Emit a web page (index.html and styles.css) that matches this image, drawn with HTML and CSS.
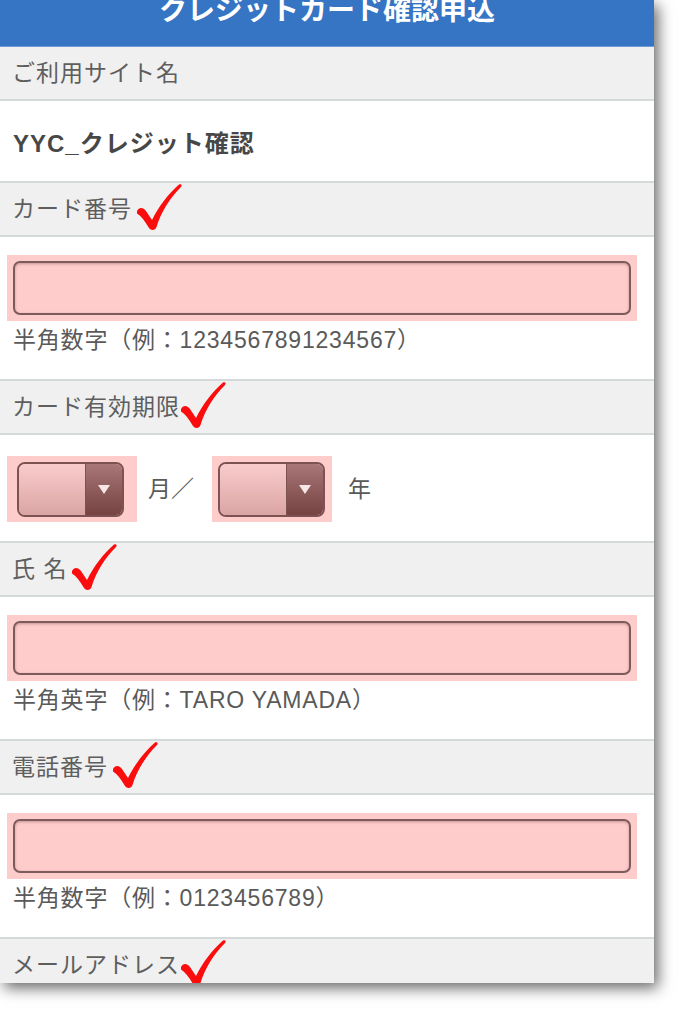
FILE: index.html
```html
<!DOCTYPE html>
<html lang="ja">
<head>
<meta charset="utf-8">
<title>クレジットカード確認申込</title>
<link rel="stylesheet" href="styles.css">
</head>
<body>
<svg class="defs" width="0" height="0" aria-hidden="true">
  <defs>
    <path id="chk" d="M0,27 C2,23 6,23 9,27 L15,36 C22,22 32,9 42,0.5 C44,-0.5 45.5,1 44,3 C33,14 24,28 19.5,43 C18.5,46.5 14,47 12,44 C8,37 4,32 0,29.5 Z"/>
  </defs>
</svg>
<div class="page">
<div class="panel">
  <header class="hdr"><h1 class="hdr-title">クレジットカード確認申込</h1></header>

  <div class="band band-first"><span class="lbl">ご利用サイト名</span></div>
  <div class="row-site">YYC_クレジット確認</div>

  <div class="band"><span class="lbl">カード番号</span><svg class="chk" viewBox="0 0 45 46"><use href="#chk"/></svg></div>
  <div class="field">
    <div class="hl"><div class="inp"></div></div>
    <div class="hint">半角数字（例：1234567891234567）</div>
  </div>

  <div class="band"><span class="lbl">カード有効期限</span><svg class="chk chk-tight" viewBox="0 0 45 46"><use href="#chk"/></svg></div>
  <div class="field-exp">
    <div class="hl hl-sel1"><div class="sel"><div class="sel-main"></div><div class="sel-btn"><span class="tri"></span></div></div></div>
    <span class="unit unit-m">月／</span>
    <div class="hl hl-sel2"><div class="sel"><div class="sel-main"></div><div class="sel-btn"><span class="tri"></span></div></div></div>
    <span class="unit unit-y">年</span>
  </div>

  <div class="band"><span class="lbl">氏 名</span><svg class="chk" viewBox="0 0 45 46"><use href="#chk"/></svg></div>
  <div class="field">
    <div class="hl"><div class="inp"></div></div>
    <div class="hint">半角英字（例：TARO YAMADA）</div>
  </div>

  <div class="band"><span class="lbl">電話番号</span><svg class="chk" viewBox="0 0 45 46"><use href="#chk"/></svg></div>
  <div class="field">
    <div class="hl"><div class="inp"></div></div>
    <div class="hint">半角数字（例：0123456789）</div>
  </div>

  <div class="band band-last"><span class="lbl">メールアドレス</span><svg class="chk chk-tight" viewBox="0 0 45 46"><use href="#chk"/></svg></div>
</div>
</div>
</body>
</html>
```
FILE: styles.css
```css
html, body {
  margin: 0;
  padding: 0;
  background: #ffffff;
}
body {
  font-family: "Liberation Sans", "Noto Sans CJK JP", sans-serif;
  color: #5a5a5a;
}
.defs {
  position: absolute;
  width: 0;
  height: 0;
}
.page {
  height: 1024px;
  overflow: hidden;
}
.panel {
  width: 654px;
  height: 983px;
  overflow: hidden;
  background: #ffffff;
  box-shadow: 4px 5px 14px rgba(0, 0, 0, 0.6);
}
.hdr {
  height: 46px;
  background: #3674c4;
  border-bottom: 1px solid #6f9bd6;
  overflow: hidden;
  display: flex;
  justify-content: center;
}
.hdr-title {
  margin: -12px 0 0 0;
  font-family: "Noto Sans CJK JP", sans-serif;
  font-size: 28px;
  line-height: 40px;
  font-weight: 700;
  color: #ffffff;
}
.band {
  height: 52px;
  background: #f0f0f0;
  border-top: 2px solid #d6d9d9;
  border-bottom: 2px solid #d6d9d9;
  display: flex;
  align-items: center;
  padding-left: 12px;
}
.band-first {
  border-top: none;
}
.band-last {
  border-bottom: none;
}
.lbl {
  font-size: 23px;
  letter-spacing: 1px;
  color: #5e5e5e;
  line-height: 30px;
}
.chk {
  width: 45px;
  height: 46px;
  align-self: flex-start;
  margin-top: 1px;
  margin-left: 5px;
  fill: #fb0d0d;
  overflow: visible;
}
.chk-tight {
  margin-left: 1px;
}
.row-site {
  height: 80px;
  display: flex;
  align-items: center;
  padding-left: 13px;
  font-size: 24px;
  letter-spacing: 1px;
  font-weight: 700;
  color: #474747;
}
.field {
  padding: 18px 0 26px 7px;
}
.hl {
  background: #ffcccc;
  padding: 6px;
  width: 618px;
}
.inp {
  height: 50px;
  border: 2px solid #7d5b5b;
  border-radius: 7px;
  background: #ffcccc;
  box-shadow: inset 0 1px 3px rgba(90, 40, 40, 0.35);
}
.hint {
  margin-top: 6px;
  padding-left: 6px;
  font-size: 23px;
  line-height: 26px;
  letter-spacing: 0.8px;
  color: #5a5a5a;
}
.field-exp {
  height: 105px;
  display: flex;
  align-items: center;
  padding-left: 7px;
  padding-top: 1px;
}
.hl-sel1 {
  width: auto;
  padding: 6px 13px 5px 10px;
}
.hl-sel2 {
  width: auto;
  padding: 6px 7px 5px 6px;
}
.sel {
  width: 103px;
  height: 51px;
  border: 2px solid #7d5252;
  border-radius: 8px;
  overflow: hidden;
  display: flex;
}
.sel-main {
  flex: 1;
  background: linear-gradient(#f9cccc, #dba4a4);
  border-right: 1px solid #7d5252;
}
.sel-btn {
  width: 36px;
  background: linear-gradient(#a87777, #764242);
  display: flex;
  align-items: center;
  justify-content: center;
}
.tri {
  width: 0;
  height: 0;
  border-left: 6px solid transparent;
  border-right: 6px solid transparent;
  border-top: 9px solid #f6e6e6;
}
.unit {
  font-size: 23px;
  color: #5a5a5a;
  line-height: 30px;
}
.unit-m {
  margin: 0 18px 0 11px;
}
.unit-y {
  margin-left: 16px;
}
```
